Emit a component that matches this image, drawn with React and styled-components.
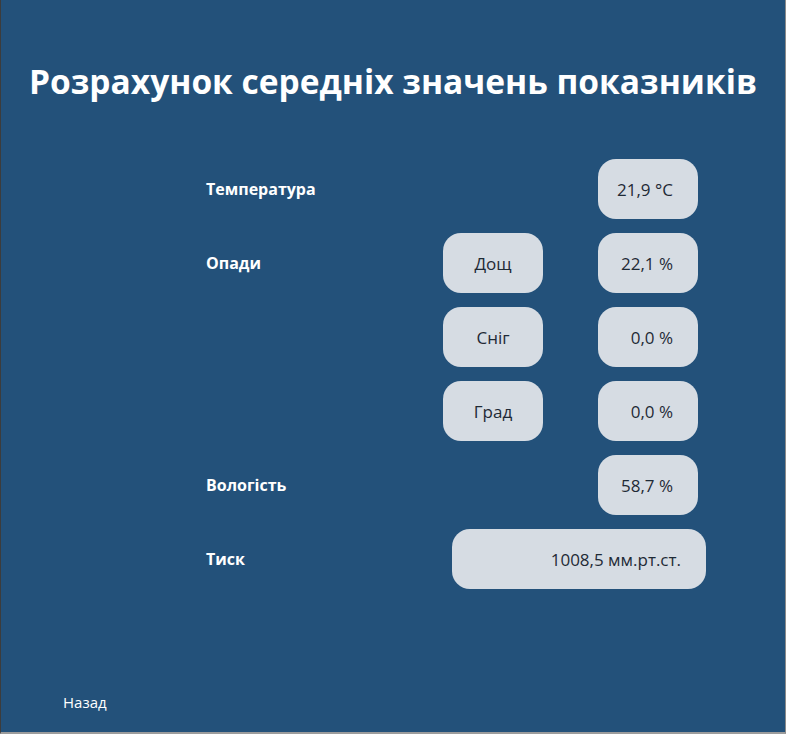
import React from 'react';
import styled, { createGlobalStyle } from 'styled-components';

const Global = createGlobalStyle`
  html, body {
    margin: 0;
    padding: 0;
  }
  body {
    font-family: "Open Sans", "Noto Sans", sans-serif;
  }
`;

const rows = [
  { label: 'Температура', value: '21,9 °С' },
  { label: 'Опади', kind: 'Дощ', value: '22,1 %' },
  { kind: 'Сніг', value: '0,0 %' },
  { kind: 'Град', value: '0,0 %' },
  { label: 'Вологість', value: '58,7 %' },
];

export default function App() {
  return (
    <>
      <Global />
      <Page>
        <Title>Розрахунок середніх значень показників</Title>
        <Table>
          {rows.map((r, i) => (
            <React.Fragment key={i}>
              <Label>{r.label}</Label>
              {r.kind && <Kind>{r.kind}</Kind>}
              <Value>{r.value}</Value>
            </React.Fragment>
          ))}
          <Label>Тиск</Label>
          <Value wide>1008,5 мм.рт.ст.</Value>
        </Table>
        <Footer>
          <Back href="#">Назад</Back>
        </Footer>
      </Page>
    </>
  );
}

const Page = styled.div`
  box-sizing: border-box;
  height: 100vh;
  display: flex;
  flex-direction: column;
  background-color: #23517a;
  border-left: 1px solid #3c3c3c;
  border-right: 1px solid #8a8a8a;
  border-bottom: 2px solid #9c9c9c;
`;

const Title = styled.h1`
  margin: 57px 0 0;
  text-align: center;
  color: #fff;
  font-size: 33.5px;
  font-weight: 700;
  line-height: 48px;
`;

const Table = styled.div`
  display: grid;
  grid-template-columns: 237px 100px 55px 100px;
  grid-auto-rows: 60px;
  row-gap: 14px;
  align-items: center;
  margin: 54px 0 0 205px;
`;

const Label = styled.div`
  grid-column: 1;
  color: #fff;
  font-size: 16px;
  font-weight: 700;
`;

const Box = styled.div`
  box-sizing: border-box;
  height: 60px;
  border-radius: 18px;
  background-color: #d6dce3;
  color: #1f2a36;
  font-size: 17px;
  display: flex;
  align-items: center;
  white-space: nowrap;
`;

const Kind = styled(Box)`
  grid-column: 2;
  justify-content: center;
`;

const Value = styled(Box)`
  grid-column: ${p => (p.wide ? '2 / 5' : '4')};
  justify-content: flex-end;
  padding-right: 25px;
  ${p => p.wide && `
    margin: 0 -8px 0 9px;
  `}
`;

const Footer = styled.div`
  margin-top: auto;
  padding: 0 0 19px 62px;
`;

const Back = styled.a`
  color: #fff;
  font-size: 15px;
  text-decoration: none;
`;
